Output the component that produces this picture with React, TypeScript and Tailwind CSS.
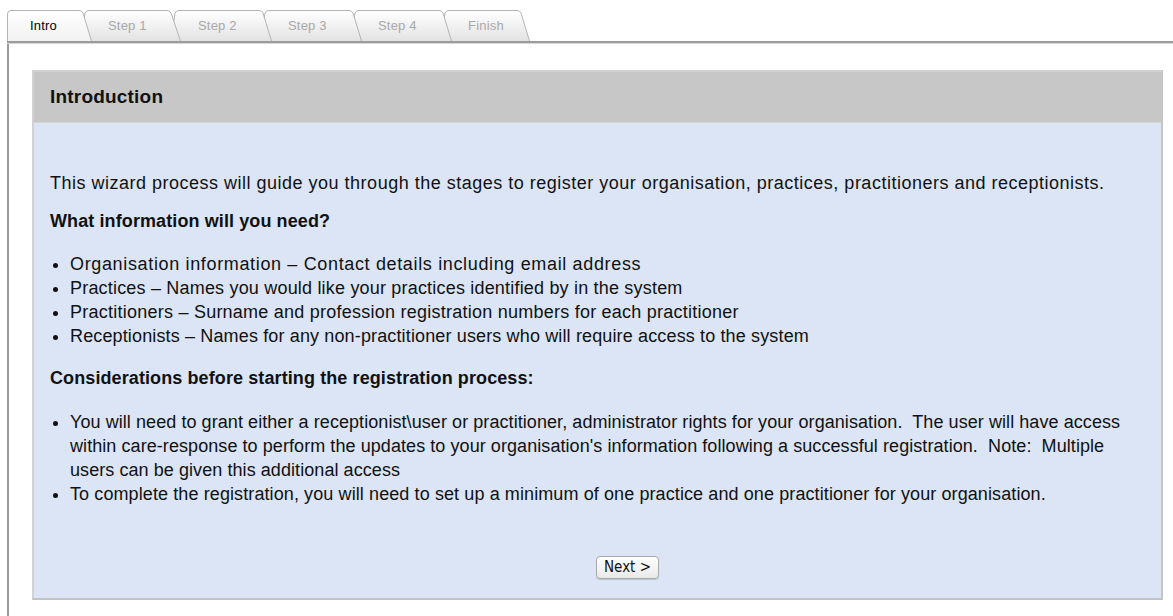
import React from "react";

type TabProps = {
  label: string;
  width: number;
  topLeft: number;
  topRight: number;
  active?: boolean;
  className: string;
  labelClass: string;
};

// A single wizard tab: a slanted, rounded shape drawn in SVG with its label on top.
function Tab({ label, width, topLeft, topRight, active, className, labelClass }: TabProps) {
  const h = 31;
  const d = active
    ? `M0.5,${h} L0.5,4 Q0.5,0.5 4,0.5 L${topRight - 3},0.5 Q${topRight},0.5 ${topRight + 1},3 L${width - 0.5},${h}`
    : `M${topLeft - 4},${h} L${topLeft},3 Q${topLeft + 1},0.5 ${topLeft + 4},0.5 L${topRight - 3},0.5 Q${topRight},0.5 ${topRight + 1},3 L${width - 0.5},${h}`;
  const gid = `g-${label.replace(/\s/g, "")}`;
  return (
    <div className={`relative h-[31px] flex items-center ${className}`} style={{ width }}>
      <svg className="absolute inset-0" width={width} height={h} viewBox={`0 0 ${width} ${h}`}>
        <defs>
          <linearGradient id={gid} x1="0" y1="0" x2="0" y2="1">
            <stop offset="0" stopColor="#ffffff" />
            <stop offset="1" stopColor={active ? "#f1f1f1" : "#e3e3e3"} />
          </linearGradient>
        </defs>
        <path d={d} fill={`url(#${gid})`} stroke="#b3b3b3" strokeWidth="1" />
      </svg>
      <span className={`relative text-[13px] tracking-[0.2px] leading-none ${labelClass}`}>{label}</span>
    </div>
  );
}

export default function App() {
  return (
    <div className="min-h-[616px] bg-white font-['Liberation_Sans',Arial,sans-serif] text-[#111]">
      {/* Tab strip */}
      <div className="pt-[10px] pl-[7px] flex">
        <Tab label="Intro" width={85} topLeft={0} topRight={75} active className="z-[6]" labelClass="text-black pl-[23px]" />
        <Tab label="Step 1" width={101} topLeft={5} topRight={90} className="z-[5] -ml-[12px]" labelClass="text-[#a8a8a8] pl-[28px]" />
        <Tab label="Step 2" width={102} topLeft={5} topRight={92} className="z-[4] -ml-[11px]" labelClass="text-[#a8a8a8] pl-[28px]" />
        <Tab label="Step 3" width={102} topLeft={5} topRight={92} className="z-[3] -ml-[12px]" labelClass="text-[#a8a8a8] pl-[28px]" />
        <Tab label="Step 4" width={102} topLeft={5} topRight={92} className="z-[2] -ml-[12px]" labelClass="text-[#a8a8a8] pl-[28px]" />
        <Tab label="Finish" width={90} topLeft={5} topRight={80} className="z-[1] -ml-[12px]" labelClass="text-[#a8a8a8] pl-[28px]" />
      </div>

      <div className="ml-[7px]">
        <div className="h-[3px] bg-[#9b9b9b] border-b border-[#d8d8d8]" />
        <div className="border-l-2 border-[#9b9b9b] min-h-[572px] pl-[23px] pr-[10px] pt-[26px]">
          {/* Introduction panel */}
          <div className="border-2 border-[#d2d2d2] border-r-[#c4c4c4] border-b-[#c2c2c2]">
            <div className="h-[51px] bg-[#c7c7c7] border-b border-[#d6d6d6] flex items-center pl-[16px]">
              <h1 className="text-[19px] tracking-[0.2px] font-bold text-[#111]">Introduction</h1>
            </div>
            <div className="bg-[#dbe5f5] pl-[16px] pt-[48px] pb-[19px] text-[18px] leading-[24px] tracking-[0.2px] whitespace-nowrap">
              <p className="tracking-[0.5px]">
                This wizard process will guide you through the stages to register your organisation, practices,
                practitioners and receptionists.
              </p>
              <p className="font-bold tracking-[0.1px] mt-[14px]">What information will you need?</p>
              <ul className="list-disc pl-[20px] mt-[19px]">
                <li className="tracking-[0.65px]">Organisation information – Contact details including email address</li>
                <li className="tracking-[0.19px]">Practices – Names you would like your practices identified by in the system</li>
                <li className="tracking-[0.24px]">Practitioners – Surname and profession registration numbers for each practitioner</li>
                <li className="tracking-[0.14px]">Receptionists – Names for any non-practitioner users who will require access to the system</li>
              </ul>
              <p className="font-bold tracking-[0.1px] mt-[18px]">Considerations before starting the registration process:</p>
              <ul className="list-disc pl-[20px] mt-[20px]">
                <li className="tracking-[0.07px]">
                  You will need to grant either a receptionist\user or practitioner, administrator rights for your
                  organisation.&nbsp; The user will have access
                  <br />
                  within care-response to perform the updates to your organisation's information following a
                  successful registration.&nbsp; Note:&nbsp; Multiple
                  <br />
                  users can be given this additional access
                </li>
                <li className="tracking-[0.1px]">
                  To complete the registration, you will need to set up a minimum of one practice and one
                  practitioner for your organisation.
                </li>
              </ul>
              <div className="flex justify-center mt-[50px] pr-[16px] tracking-normal">
                <button className="ml-[60px] h-[23px] px-[7px] rounded-[4px] border border-[#a9a9a9] bg-gradient-to-b from-white to-[#e9e9e9] text-[15px] leading-none text-[#111] font-['DejaVu_Sans_Condensed','Liberation_Sans',sans-serif] shadow-[0_1px_1px_rgba(0,0,0,0.15)]">
                  Next &gt;
                </button>
              </div>
            </div>
          </div>
        </div>
      </div>
    </div>
  );
}
